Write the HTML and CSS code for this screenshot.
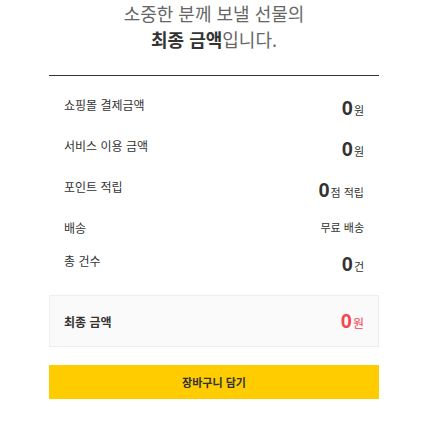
FILE: index.html
```html
<!DOCTYPE html>
<html lang="ko">
<head>
    <meta charset="UTF-8">
    <meta name="viewport" content="width=device-width, initial-scale=1.0">
    <title>최종 금액</title>
    <link rel="stylesheet" href="styles.css">
</head>
<body>
    <div class="wrap">
        <h2 class="title">
            소중한 분께 보낼 선물의<br>
            <b>최종 금액</b>입니다.
        </h2>

        <dl class="summary">
            <div class="row">
                <dt>쇼핑몰 결제금액</dt>
                <dd><span class="num">0</span>원</dd>
            </div>
            <div class="row">
                <dt>서비스 이용 금액</dt>
                <dd><span class="num">0</span>원</dd>
            </div>
            <div class="row">
                <dt>포인트 적립</dt>
                <dd><span class="num">0</span>점 적립</dd>
            </div>
            <div class="row">
                <dt>배송</dt>
                <dd>무료 배송</dd>
            </div>
            <div class="row">
                <dt>총 건수</dt>
                <dd><span class="num">0</span>건</dd>
            </div>
        </dl>

        <div class="total">
            <span class="total-label">최종 금액</span>
            <span class="total-value"><span class="num">0</span>원</span>
        </div>

        <button type="button" class="cart-btn">장바구니 담기</button>
    </div>
</body>
</html>
```

FILE: styles.css
```css
body {
    margin: 0;
    font-family: "Noto Sans CJK KR", "Noto Sans", sans-serif;
    color: #333;
    background: #fff;
}
.wrap {
    width: 330px;
    margin-left: 49px;
}
.title {
    margin: 0;
    font-size: 18px;
    font-weight: normal;
    line-height: 26px;
    text-align: center;
    color: #666;
}
.title b {
    color: #333;
}
.summary {
    margin: 23px 0 0;
    padding: 20px 15px 2px;
    border-top: 1px solid #333;
}
.row {
    display: flex;
    justify-content: space-between;
    align-items: flex-start;
    margin-bottom: 16px;
    font-size: 12px;
    line-height: 17px;
}
.row dt,
.row dd {
    margin: 0;
}
.row dd {
    font-size: 11px;
}
.num {
    font-family: "Liberation Sans", Arial, sans-serif;
    font-size: 20px;
    font-weight: bold;
    line-height: 25px;
    margin-right: 1px;
}
.total {
    display: flex;
    justify-content: space-between;
    align-items: center;
    height: 50px;
    padding: 0 14px;
    background: #fafafa;
    border: 1px solid #eee;
}
.total-label {
    font-size: 12px;
    font-weight: bold;
}
.total-value {
    font-size: 12px;
    color: #f5434f;
}
.cart-btn {
    display: block;
    width: 100%;
    height: 34px;
    margin-top: 18px;
    border: none;
    background: #ffcc00;
    color: #333;
    font-family: "Noto Sans CJK KR", "Noto Sans", sans-serif;
    font-size: 11px;
    font-weight: bold;
    cursor: pointer;
}
```
